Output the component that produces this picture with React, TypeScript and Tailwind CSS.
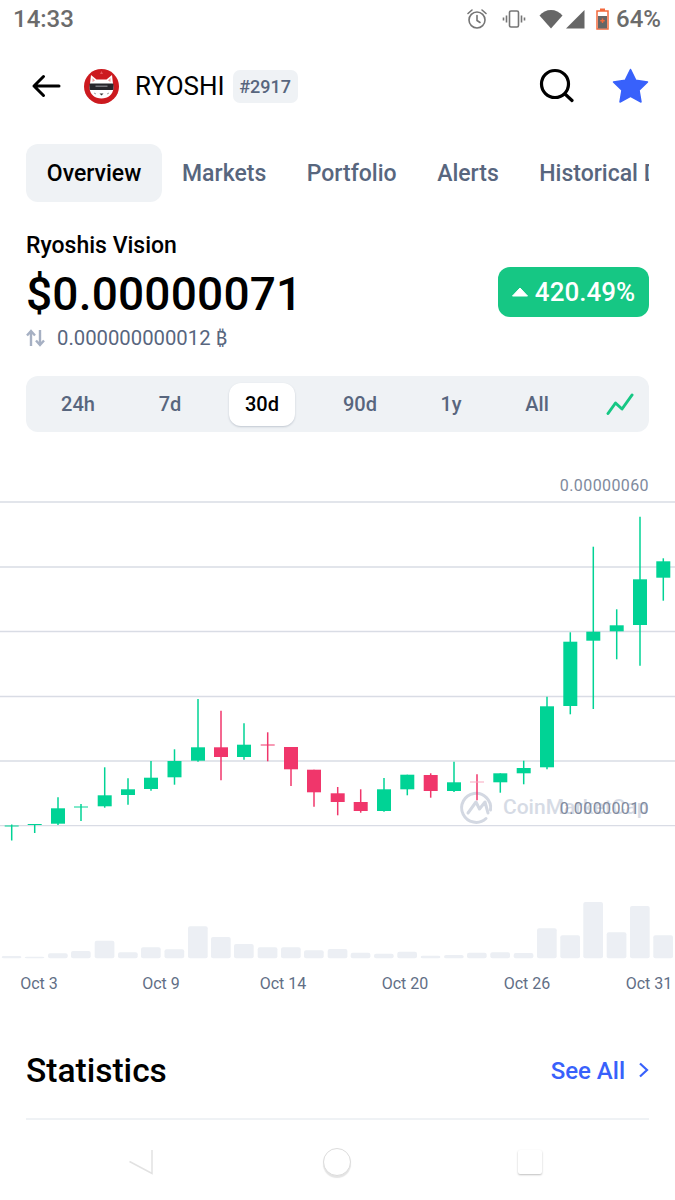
const FONT = "font-['Roboto','Noto_Sans',sans-serif]";

const GRID_LINES = [502, 567, 631.5, 696.5, 761, 825.7];

// x, body top, body bottom, wick top, wick bottom, volume bar top
const CANDLES: { x: number; t: number; b: number; wt: number; wb: number; v: number; up: boolean; faint?: boolean }[] = [
  { x: 11.7, t: 825.5, b: 826.5, wt: 824.5, wb: 840.5, v: 956, up: true },
  { x: 34.7, t: 824, b: 825, wt: 824, wb: 833, v: 956.7, up: true },
  { x: 58, t: 808.3, b: 823.7, wt: 797.3, wb: 825, v: 953.3, up: true },
  { x: 81, t: 806.5, b: 807.5, wt: 804, wb: 821, v: 951, up: true },
  { x: 104.7, t: 795.3, b: 806.3, wt: 767.3, wb: 807.7, v: 940.7, up: true },
  { x: 128, t: 789.3, b: 795, wt: 778.3, wb: 804.7, v: 952.3, up: true },
  { x: 151, t: 777.7, b: 789, wt: 761, wb: 790.7, v: 947.3, up: true },
  { x: 174.5, t: 761, b: 777.3, wt: 749.3, wb: 784.7, v: 949.3, up: true },
  { x: 198, t: 747.3, b: 760.7, wt: 699, wb: 761.7, v: 926.3, up: true },
  { x: 221, t: 747.3, b: 757, wt: 710.7, wb: 780.3, v: 937, up: false },
  { x: 244, t: 744.7, b: 757, wt: 723.3, wb: 759.7, v: 944, up: true },
  { x: 267.7, t: 744.5, b: 745.5, wt: 732.3, wb: 761.3, v: 947.3, up: false },
  { x: 291, t: 747, b: 769.3, wt: 747, wb: 786, v: 947.3, up: false },
  { x: 314, t: 769.7, b: 792.3, wt: 769.7, wb: 806.7, v: 950.3, up: false },
  { x: 337.7, t: 793.3, b: 802, wt: 787, wb: 815.3, v: 949, up: false },
  { x: 360.7, t: 802, b: 811, wt: 789.3, wb: 812.7, v: 952.7, up: false },
  { x: 384, t: 789.3, b: 811, wt: 778, wb: 811.7, v: 953.7, up: true },
  { x: 407.3, t: 774.7, b: 789.3, wt: 774.7, wb: 795.3, v: 951.7, up: true },
  { x: 430.7, t: 775, b: 791, wt: 773.3, wb: 797.7, v: 955.7, up: false },
  { x: 454, t: 782.3, b: 791, wt: 761.7, wb: 792, v: 955, up: true },
  { x: 477, t: 781.5, b: 782.5, wt: 774.3, wb: 800.3, v: 952.7, up: false, faint: true },
  { x: 500.3, t: 773.3, b: 782.3, wt: 773.3, wb: 792.7, v: 952.3, up: true },
  { x: 523.7, t: 768, b: 773.3, wt: 760.7, wb: 784.3, v: 953, up: true },
  { x: 547, t: 706.3, b: 767.3, wt: 696.7, wb: 769.3, v: 928.3, up: true },
  { x: 570.3, t: 641.7, b: 706, wt: 632.3, wb: 714.3, v: 935.3, up: true },
  { x: 593.3, t: 631.7, b: 640.7, wt: 546.7, wb: 709, v: 902, up: true },
  { x: 616.7, t: 625.3, b: 631.3, wt: 609.3, wb: 659.3, v: 932.3, up: true },
  { x: 640, t: 579.3, b: 625, wt: 516.7, wb: 665.7, v: 906, up: true },
  { x: 663.3, t: 561.3, b: 577.7, wt: 558.3, wb: 600.7, v: 935.3, up: true },
];

const TOP = 473; // page y of the chart's top edge
const VOL_BOTTOM = 958.3;
const GREEN = "#00d395";
const RED = "#f0366b";

function StatusBar() {
  return (
    <div className="flex h-[38px] items-center justify-between pl-[13px] pr-[14px] text-[#6b6b6b]">
      <span className="text-[24px] font-medium leading-none">14:33</span>
      <div className="flex items-center">
        <svg width="24" height="24" viewBox="0 0 24 24" fill="none" stroke="#757575" strokeWidth="1.6" className="mr-[13px]">
          <circle cx="12" cy="13" r="8" />
          <path d="M12 8.5V13.5L15 15.5M3 6.5L7 3M21 6.5L17 3" strokeLinecap="round" />
        </svg>
        <svg width="24" height="20" viewBox="0 0 24 20" fill="none" stroke="#757575" strokeWidth="1.6" className="mr-[13px]">
          <rect x="7.5" y="2" width="9" height="16" rx="1.5" />
          <path d="M4.5 6.5V13.5M1.5 8.5V11.5M19.5 6.5V13.5M22.5 8.5V11.5" />
        </svg>
        <svg width="24" height="20" viewBox="0 0 24 20" fill="#666" className="mr-[2px]">
          <path d="M0.5 6.5C3.5 3 7.5 1 12 1S20.500 3 23.500 6.500L12 19.500Z" />
        </svg>
        <svg width="20" height="20" viewBox="0 0 20 20" fill="#666" className="mr-[11px]">
          <path d="M19.500 1V19.500H1Z" />
        </svg>
        <svg width="13" height="22" viewBox="0 0 13 22" className="mr-[7px]">
          <rect x="1" y="3" width="11" height="18" fill="#fff" stroke="#f4693c" strokeWidth="1.5" />
          <rect x="4" y="0.500" width="5" height="2.500" fill="#f4693c" />
          <rect x="2" y="8" width="9" height="12.500" fill="#666" />
          <path d="M6.500 10.500V15M4.300 12.700H8.700" stroke="#f4693c" strokeWidth="1.500" />
        </svg>
        <span className="text-[24px] font-medium leading-none">64%</span>
      </div>
    </div>
  );
}

function CoinLogo() {
  return (
    <svg width="35" height="35" viewBox="0 0 35 35">
      <circle cx="17.500" cy="17.500" r="17.500" fill="#cc1a1f" />
      <path d="M17.500 2L19 5H16Z" fill="#e8555a" />
      <path d="M7 6L12.500 10.500H22.500L28 6L29.500 19C29 25.500 24 29.500 17.500 29.500S6 25.500 5.500 19Z" fill="#fff" />
      <path d="M8.500 9L11 11.500L8.500 13ZM26.500 9L24 11.500L26.500 13Z" fill="#e9a0a0" />
      <rect x="5.500" y="14.500" width="24" height="6.500" rx="1" fill="#26262b" />
      <rect x="11.500" y="16.500" width="12" height="1.500" fill="#77777d" />
      <path d="M15.500 24.500H19.500L17.500 26.500Z" fill="#333" />
      <path d="M12 25L10 24M23 25L25 24" stroke="#888" strokeWidth="0.800" />
    </svg>
  );
}

function Header() {
  return (
    <div className="mt-[18px] flex h-[60px] items-center pl-[31px] pr-[26px]">
      <svg width="30" height="30" viewBox="0 0 30 30" fill="none" stroke="#000" strokeWidth="3" strokeLinecap="round" strokeLinejoin="round">
        <path d="M3 15H28M12.500 5.500L3 15L12.500 24.500" />
      </svg>
      <div className="ml-[23px]">
        <CoinLogo />
      </div>
      <span className="ml-[16px] text-[26px] font-normal leading-none text-black">RYOSHI</span>
      <span className="ml-[8px] flex h-[33px] w-[65px] items-center justify-center rounded-[7px] bg-[#eff2f5] text-[18px] font-medium text-[#58667e]">
        #2917
      </span>
      <div className="ml-auto flex items-center">
        <svg width="36" height="36" viewBox="0 0 36 36" fill="none" stroke="#000" strokeWidth="3.200" strokeLinecap="round">
          <circle cx="17" cy="16" r="13.500" />
          <path d="M27 26L34 32.500" />
        </svg>
        <svg width="37" height="36" viewBox="0 0 37 36" fill="#3861fb" className="ml-[38px]">
          <path d="M18.500 1.500L23.800 12.300L35.500 14L27 22.200L29 34L18.500 28.400L8 34L10 22.200L1.500 14L13.200 12.300Z" stroke="#3861fb" strokeWidth="1.500" strokeLinejoin="round" />
        </svg>
      </div>
    </div>
  );
}

function Tabs() {
  return (
    <div className="mx-[26px] mt-[28px] flex h-[58px] items-center overflow-hidden text-[23px] font-medium leading-none text-[#58667e]">
      <span className="flex h-[58px] w-[136px] shrink-0 items-center justify-center rounded-[12px] bg-[#eff2f5] text-black">
        Overview
      </span>
      <div className="ml-[20px] flex gap-[40.5px] whitespace-nowrap">
        <span className="shrink-0">Markets</span>
        <span className="shrink-0">Portfolio</span>
        <span className="shrink-0">Alerts</span>
        <span className="shrink-0">Historical Data</span>
      </div>
    </div>
  );
}

function PriceBlock() {
  return (
    <div className="mt-[30px] flex items-start justify-between px-[26px]">
      <div>
        <div className="text-[23px] font-medium leading-[28px] text-black">Ryoshis Vision</div>
        <div className="mt-[8px] text-[46px] font-medium leading-[52px] tracking-[0.2px] text-black">$0.00000071</div>
        <div className="mt-[5px] flex items-center">
          <svg width="19" height="18" viewBox="0 0 19 18" fill="none" stroke="#a6b0c3" strokeWidth="2.400">
            <path d="M5 17V3M1 6.500L5 2L9 6.500M14 1V15M10 11.500L14 16L18 11.500" />
          </svg>
          <span className="ml-[12px] text-[20.3px] leading-[26px] text-[#58667e]">0.000000000012 ₿</span>
        </div>
      </div>
      <div className="mt-[35px] flex h-[50px] w-[151px] items-center justify-center rounded-[12px] bg-[#16c784] text-[26px] font-medium text-white">
        <svg width="16" height="10" viewBox="0 0 16 10" fill="#fff" className="mr-[7px]">
          <path d="M8 1L15.500 9H0.500Z" strokeLinejoin="round" stroke="#fff" />
        </svg>
        420.49%
      </div>
    </div>
  );
}

function RangeTabs() {
  return (
    <div className="mx-[26px] mt-[25px] flex h-[56px] items-center rounded-[12px] bg-[#eff2f5] text-[20px] font-medium leading-none text-[#58667e]">
      <span className="ml-[6px] w-[92px] shrink-0 text-center">24h</span>
      <span className="w-[92px] shrink-0 text-center">7d</span>
      <span className="ml-[13px] flex h-[43px] w-[66px] shrink-0 items-center justify-center rounded-[12px] bg-white text-black shadow-[0_1px_2px_rgba(88,102,126,0.3)]">
        30d
      </span>
      <span className="ml-[25px] w-[80px] shrink-0 text-center">90d</span>
      <span className="ml-[21px] w-[60px] shrink-0 text-center">1y</span>
      <span className="ml-[26px] w-[60px] shrink-0 text-center">All</span>
      <svg width="28" height="24" viewBox="0 0 28 24" fill="none" stroke="#16c784" strokeWidth="3" strokeLinecap="round" strokeLinejoin="round" className="ml-[39px]">
        <path d="M2 21.500L9.500 11L16 17L26 3" />
      </svg>
    </div>
  );
}

function Chart() {
  return (
    <div className="relative mt-[41px] h-[497px] w-[675px] overflow-hidden">
      <svg width="675" height="497" viewBox={`0 ${TOP} 675 497`} className="block">
        {GRID_LINES.map((y) => (
          <line key={y} x1="0" x2="675" y1={y} y2={y} stroke="#d9dce5" strokeWidth="1.300" />
        ))}
        <g fill="none" stroke="#d3d8e2" strokeWidth="3" strokeLinecap="round" strokeLinejoin="round">
          <path d="M490.500 810A14.500 14.500 0 1 0 486 818.500" />
          <path d="M468 813L476 802L479.500 809L485 802L488 813" />
        </g>
        {CANDLES.map((c) => {
          const color = c.up ? GREEN : RED;
          return (
            <g key={c.x}>
              <rect x={c.x - 10} y={c.v} width="19.700" height={VOL_BOTTOM - c.v} rx="2" fill="#eceff4" />
              <line x1={c.x} x2={c.x} y1={c.wt} y2={c.wb} stroke={color} strokeWidth="1.500" />
              <rect x={c.x - 7} y={c.t} width="14" height={c.b - c.t} fill={c.faint ? "#f9a8bf" : color} />
            </g>
          );
        })}
      </svg>
      <span className="absolute left-[503px] top-[324px] whitespace-nowrap text-[21px] font-medium leading-none text-[#d6dbe5]">
        CoinMarketCap
      </span>
      <span className="absolute right-[26px] top-[5px] text-[16px] leading-[16px] tracking-[0.4px] text-[#808a9d]">0.00000060</span>
      <span className="absolute right-[26px] top-[328px] text-[16px] leading-[16px] tracking-[0.4px] text-[#808a9d]">0.00000010</span>
    </div>
  );
}

function AxisLabels() {
  const labels = ["Oct 3", "Oct 9", "Oct 14", "Oct 20", "Oct 26", "Oct 31"];
  return (
    <div className="mt-[4px] ml-[-22px] flex w-[734px] text-[16px] leading-[20px] text-[#616e85]">
      {labels.map((label) => (
        <span key={label} className="w-[122px] shrink-0 text-center">
          {label}
        </span>
      ))}
    </div>
  );
}

function Statistics() {
  return (
    <div className="mx-[26px] mt-[57px]">
      <div className="flex items-center justify-between pb-[27px]">
        <span className="text-[33.500px] font-medium leading-[40px] text-black">Statistics</span>
        <span className="flex items-center text-[24px] font-medium leading-none text-[#3861fb]">
          See All
          <svg width="11" height="16" viewBox="0 0 11 16" fill="none" stroke="#3861fb" strokeWidth="2.200" className="ml-[13px] -translate-y-px">
            <path d="M2 1.500L9 8L2 14.500" />
          </svg>
        </span>
      </div>
      <div className="h-[2px] bg-[#eff2f5]" />
    </div>
  );
}

function NavBar() {
  return (
    <div className="absolute bottom-[24px] left-0 flex h-[28px] w-[675px] items-center">
      <svg width="26" height="28" viewBox="0 0 26 28" className="ml-[128px]">
        <path d="M24 2V25.500L1.500 13.500" fill="none" stroke="#e2e2e2" strokeWidth="1.500" />
      </svg>
      <span className="ml-[169px] h-[28px] w-[28px] rounded-full border border-[#dcdcdc] bg-white shadow-[0_2px_1px_#e4e4e4]" />
      <span className="ml-[167px] h-[24px] w-[24px] rounded-[2px] bg-white shadow-[0_1px_2px_rgba(0,0,0,0.25)]" />
    </div>
  );
}

export default function App() {
  return (
    <div className={`relative h-[1200px] w-[675px] overflow-hidden bg-white ${FONT}`}>
      <StatusBar />
      <Header />
      <Tabs />
      <PriceBlock />
      <RangeTabs />
      <Chart />
      <AxisLabels />
      <Statistics />
      <NavBar />
    </div>
  );
}
